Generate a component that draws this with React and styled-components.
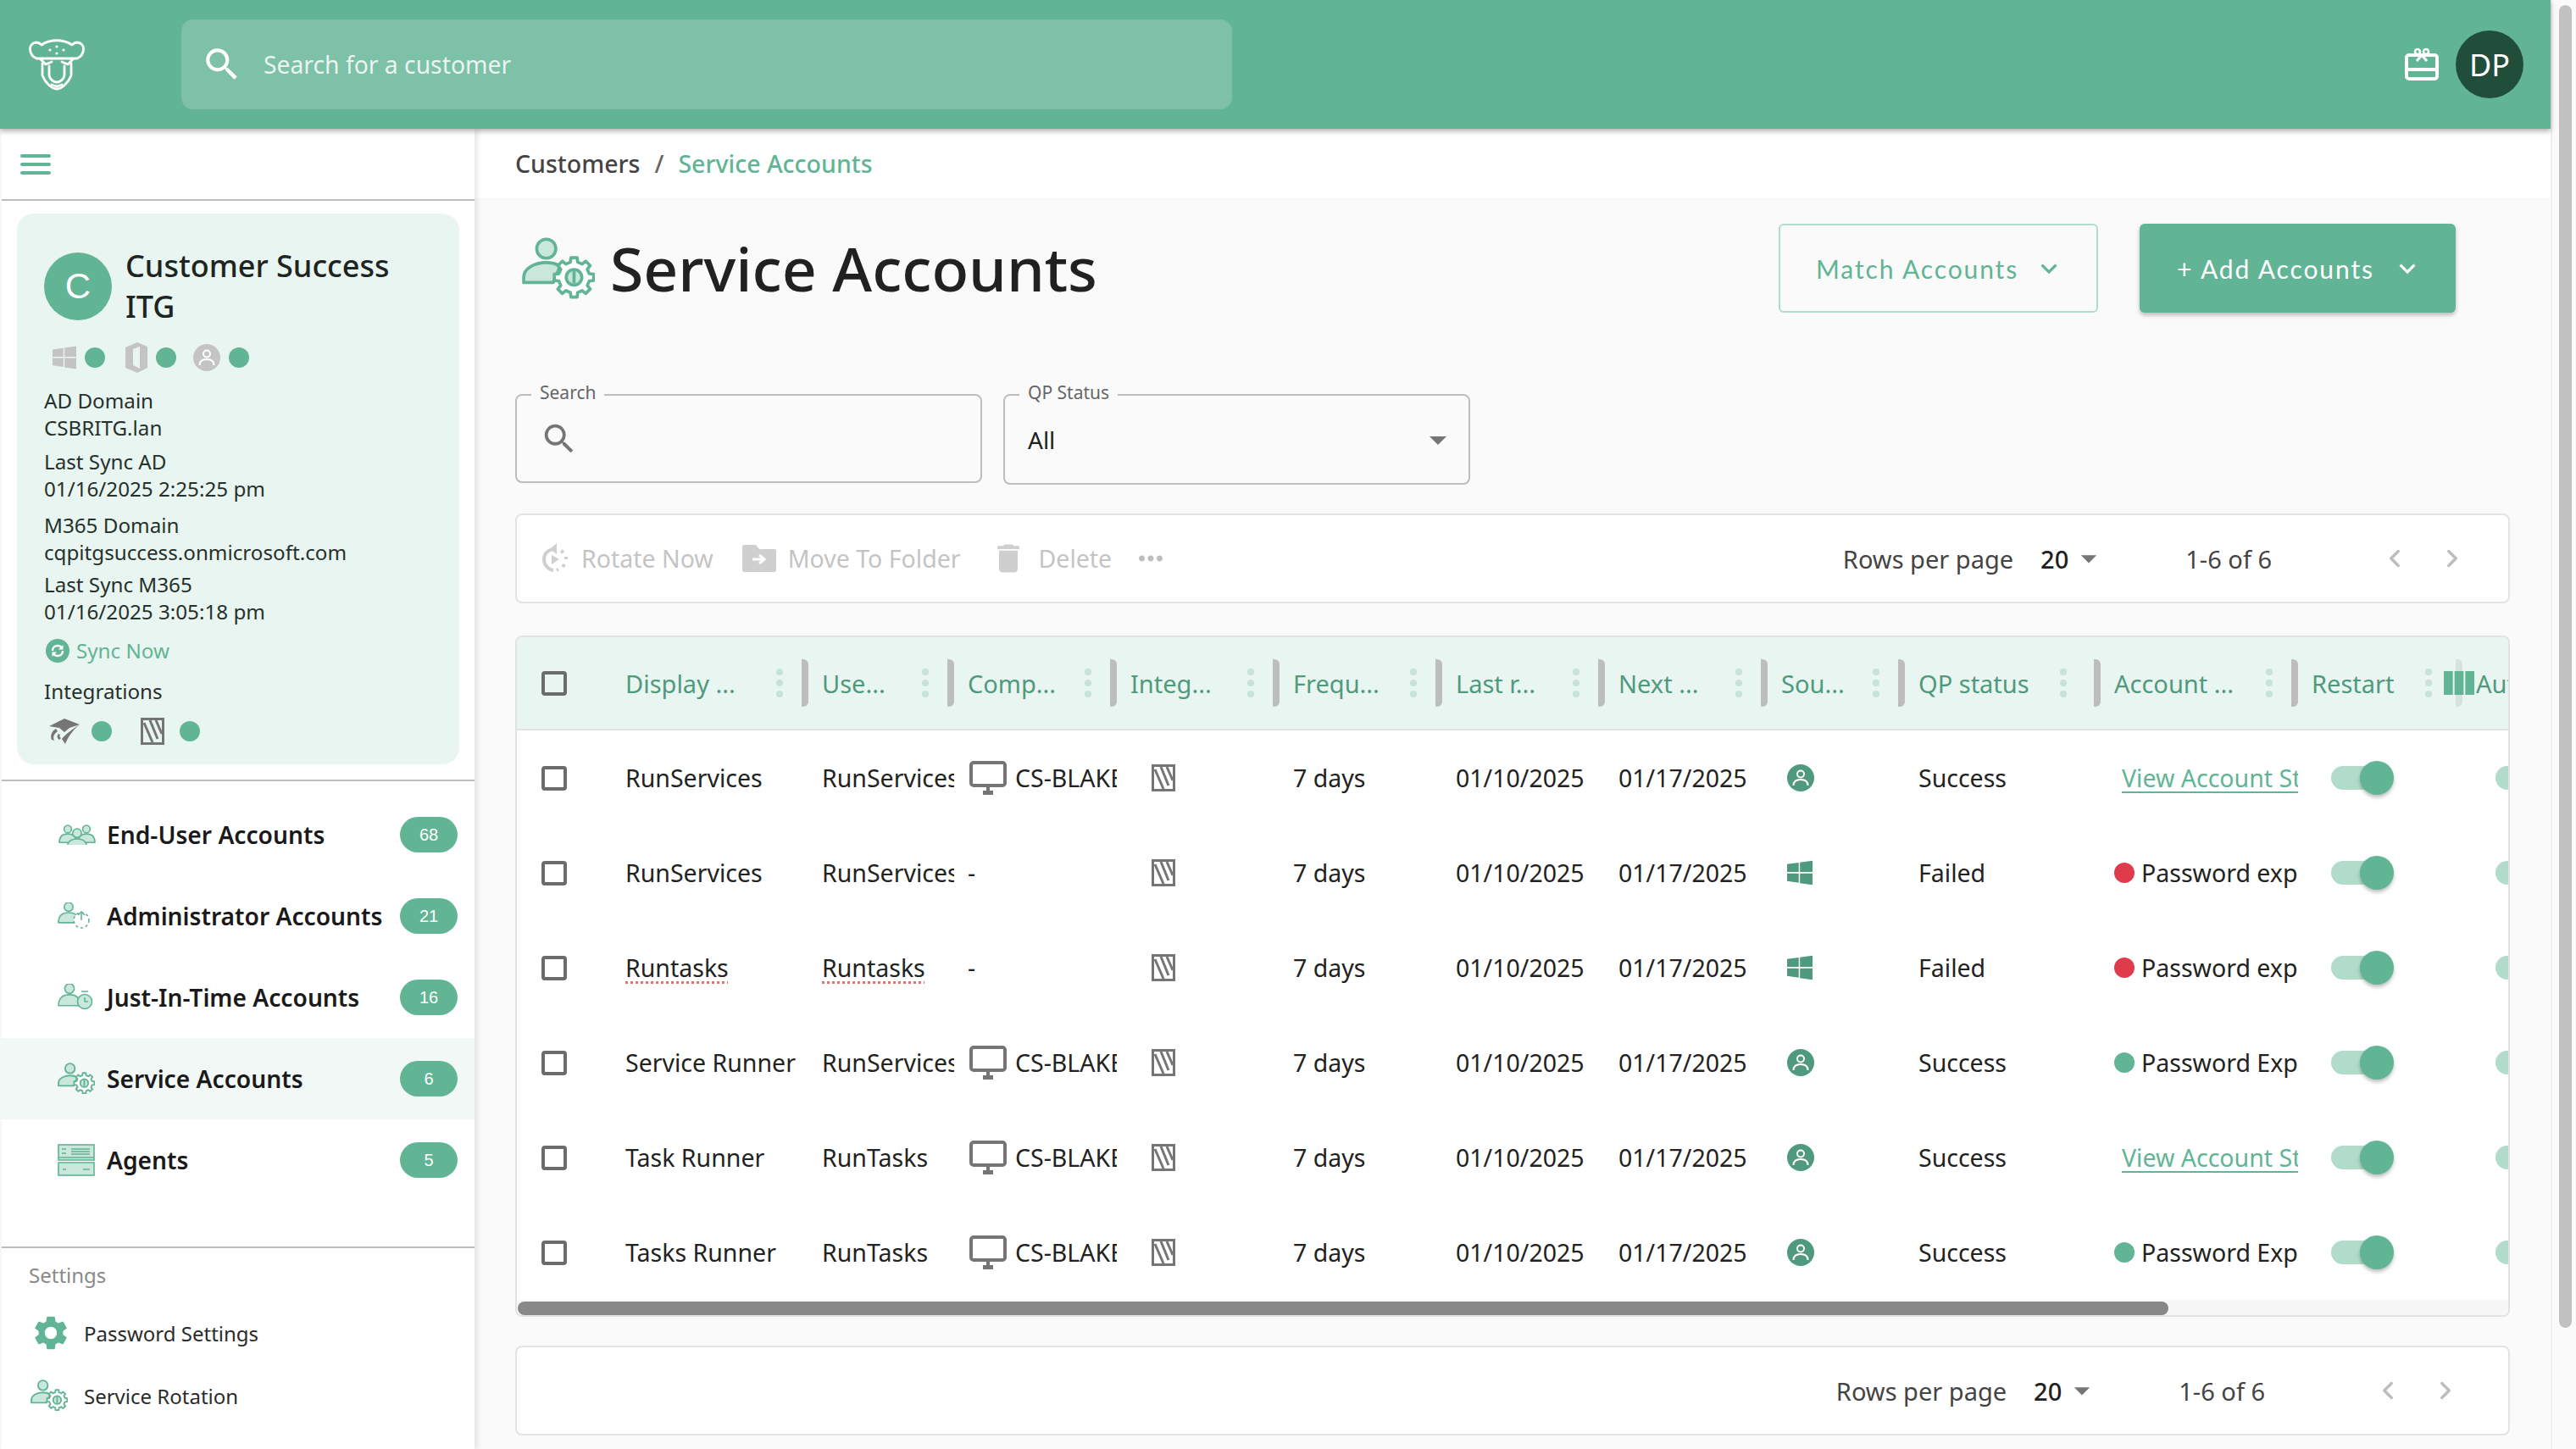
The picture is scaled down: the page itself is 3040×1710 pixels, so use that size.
import React from 'react'
import styled, { createGlobalStyle } from 'styled-components'
import { MdSearch, MdKeyboardArrowDown, MdArrowDropDown, MdSettings, MdDelete, MdMoreHoriz, MdViewColumn } from 'react-icons/md'
import { ChevronLeft, ChevronRight } from 'lucide-react'

const GREEN = '#61b494'
const LIGHT = '#c9e7db'
const GREY = '#757575'

const COLUMNS = '108px 232px 172px 192px 192px 192px 192px 192px 162px 231px 233px 194px 194px'

const headers = [
    { label: 'Display ...' }, { label: 'Use...' }, { label: 'Comp...' }, { label: 'Integ...' },
    { label: 'Frequ...' }, { label: 'Last r...' }, { label: 'Next ...' }, { label: 'Sou...' },
    { label: 'QP status', kebab: 32 }, { label: 'Account ...' },
    { label: 'Restart', kebab: 28, divider: '#d5e3dd' }, { label: 'Auto restart', divider: 'transparent' },
]

const rows = [
    { name: 'RunServices', user: 'RunServices', computer: 'CS-BLAKE-PC', source: 'user', qp: 'Success', account: 'link' },
    { name: 'RunServices', user: 'RunServices', computer: null, source: 'windows', qp: 'Failed', account: 'failed' },
    { name: 'Runtasks', user: 'Runtasks', computer: null, source: 'windows', qp: 'Failed', account: 'failed', flagged: true },
    { name: 'Service Runner', user: 'RunServices', computer: 'CS-BLAKE-PC', source: 'user', qp: 'Success', account: 'ok' },
    { name: 'Task Runner', user: 'RunTasks', computer: 'CS-BLAKE-PC', source: 'user', qp: 'Success', account: 'link' },
    { name: 'Tasks Runner', user: 'RunTasks', computer: 'CS-BLAKE-PC', source: 'user', qp: 'Success', account: 'ok' },
]

const navItems = [
    { label: 'End-User Accounts', count: 68, icon: <EndUserIcon /> },
    { label: 'Administrator Accounts', count: 21, icon: <AdminIcon /> },
    { label: 'Just-In-Time Accounts', count: 16, icon: <TimerIcon /> },
    { label: 'Service Accounts', count: 6, icon: <ServiceIcon width={44} />, active: true },
    { label: 'Agents', count: 5, icon: <AgentsIcon /> },
]

function gearPath(cx, cy, outer, inner, teeth) {
    const pts = []
    const step = (Math.PI * 2) / teeth
    for (let i = 0; i < teeth; i++) {
        const a = i * step
        const w = step * 0.2
        pts.push([cx + inner * Math.cos(a - w * 1.5), cy + inner * Math.sin(a - w * 1.5)])
        pts.push([cx + outer * Math.cos(a - w), cy + outer * Math.sin(a - w)])
        pts.push([cx + outer * Math.cos(a + w), cy + outer * Math.sin(a + w)])
        pts.push([cx + inner * Math.cos(a + w * 1.5), cy + inner * Math.sin(a + w * 1.5)])
    }
    return 'M' + pts.map((p) => p[0].toFixed(1) + ' ' + p[1].toFixed(1)).join('L') + 'Z'
}

function Logo() {
    return (
        <svg width="68" height="62" viewBox="0 0 68 62" fill="none" stroke="#fff" strokeWidth="2.8" strokeLinecap="round" strokeLinejoin="round">
            <path d="M10 24C1 20 -1 6 10 5C12 5 14 6 16 8C26 1 42 1 52 8C54 6 56 5 58 5C69 6 67 20 58 24" />
            <path d="M11 24H57M14 24L21 31L28 28M54 24L47 31L40 28" />
            <path d="M17 30V44C20 52 28 60 34 60C40 60 48 52 51 44V30" />
            <path d="M25 33V43C25 48 30 52 34 52C38 52 43 48 43 43V33" />
            <path d="M28 55L34 57L40 55" />
            <g fill="#fff" stroke="none">
                <circle cx="34" cy="10" r="1.6" /><circle cx="26" cy="14" r="1.6" />
                <circle cx="42" cy="14" r="1.6" /><circle cx="34" cy="18" r="1.6" />
            </g>
        </svg>
    )
}

function GiftIcon() {
    return (
        <svg width="42" height="40" viewBox="0 0 42 40" fill="none" stroke="#fff" strokeWidth="4" strokeLinejoin="round">
            <rect x="3" y="9" width="36" height="28" rx="3" />
            <path d="M3 26H39" />
            <path d="M21 9L15 16M21 9L27 16" strokeWidth="3" />
            <circle cx="16" cy="5" r="3" strokeWidth="2.5" />
            <circle cx="26" cy="5" r="3" strokeWidth="2.5" />
        </svg>
    )
}

function WindowsIcon({ color = '#c4c4c4', size = 28 }) {
    return (
        <svg width={size} height={size} viewBox="0 0 28 28" fill={color}>
            <path d="M0 4.5L12.8 2.8V13H0ZM14.2 2.6L28 .6V13H14.2ZM0 14.6H12.8V25L0 23.2ZM14.2 14.6H28V27.4L14.2 25.4Z" />
        </svg>
    )
}

function OfficeIcon() {
    return (
        <svg width="26" height="36" viewBox="0 0 26 36" fill="#c4c4c4">
            <path d="M14 0L26 5V30L14 36L0 30V6ZM9 8V27L17 31V5Z" fillRule="evenodd" />
        </svg>
    )
}

function UserBadge({ color = '#c4c4c4', size = 32 }) {
    return (
        <svg width={size} height={size} viewBox="0 0 32 32">
            <circle cx="16" cy="16" r="16" fill={color} />
            <circle cx="16" cy="11.5" r="4" fill="none" stroke="#fff" strokeWidth="2" />
            <path d="M7.5 25C7.5 20 11 18 16 18C21 18 24.5 20 24.5 25" fill="none" stroke="#fff" strokeWidth="2" />
        </svg>
    )
}

function CapIcon() {
    return (
        <svg width="36" height="30" viewBox="0 0 36 30" fill={GREY}>
            <path d="M0 9L18 0L36 7L24 11L18 16L12 11Z" />
            <path d="M36 7C30 12 24 18 19 30L15 24C20 18 28 12 36 7Z" />
            <path d="M8 12C3 15 1 20 3 25L6 26C4 21 6 18 10 15ZM11 18C9 20 9 23 12 25L14 23C12 22 12 20 13 19Z" />
        </svg>
    )
}

function StripeMark() {
    return (
        <svg width="28" height="32" viewBox="0 0 28 32" fill="none" stroke={GREY}>
            <rect x="1.5" y="1.5" width="25" height="29" strokeWidth="3" />
            <path d="M4 6L14 29M11 3L20 25M18 3L25 19" strokeWidth="3" />
        </svg>
    )
}

function SyncIcon() {
    return (
        <svg width="28" height="28" viewBox="0 0 28 28" fill="none">
            <circle cx="14" cy="14" r="14" fill={GREEN} />
            <path d="M8 14C8 10 11 8 14 8C16 8 18 9 19 11M20 14C20 18 17 20 14 20C12 20 10 19 9 17" stroke="#fff" strokeWidth="2.4" />
            <path d="M20.5 7V12.5H15ZM7.5 21V15.5H13Z" fill="#fff" />
        </svg>
    )
}

function Person({ x = 0, y = 0, w = 30 }) {
    const h = w * 0.4
    return (
        <g transform={`translate(${x} ${y})`}>
            <circle cx={w / 2} cy={h * 0.5} r={h * 0.5} />
            <path d={`M1 ${h * 2.3}C1 ${h * 1.4} ${w * 0.25} ${h * 1.15} ${w / 2} ${h * 1.15}C${w * 0.75} ${h * 1.15} ${w - 1} ${h * 1.4} ${w - 1} ${h * 2.3}Z`} />
        </g>
    )
}

function EndUserIcon() {
    return (
        <svg width="46" height="24" viewBox="0 0 46 24" fill={LIGHT} stroke={GREEN} strokeWidth="1.6" strokeLinejoin="round">
            <Person x={1} y={1} w={22} />
            <Person x={23} y={1} w={22} />
            <Person x={10} y={5} w={26} />
        </svg>
    )
}

function AdminIcon() {
    return (
        <svg width="40" height="32" viewBox="0 0 40 32" fill={LIGHT} stroke={GREEN} strokeWidth="1.6" strokeLinejoin="round">
            <Person x={0} y={0} w={26} />
            <circle cx="28" cy="21" r="9" fill="#fff" strokeDasharray="3 3" />
            <path d="M28 21V13M24 15L28 11L32 15" fill="none" />
        </svg>
    )
}

function TimerIcon() {
    return (
        <svg width="42" height="32" viewBox="0 0 42 32" fill={LIGHT} stroke={GREEN} strokeWidth="1.6" strokeLinejoin="round">
            <Person x={0} y={0} w={28} />
            <circle cx="32" cy="21" r="8.5" />
            <path d="M32 16V21H36M28 9H36" fill="none" />
        </svg>
    )
}

function ServiceIcon({ width = 44 }) {
    return (
        <svg width={width} height={width * 0.85} viewBox="0 0 84 71" fill={LIGHT} stroke={GREEN} strokeLinejoin="round" strokeWidth="3.6">
            <circle cx="28" cy="13" r="11" />
            <path d="M2 52V46C2 36 14 29 28 29C34 29 39 30 44 33L36 52Z" />
            <path d={gearPath(60, 46, 23, 18, 8)} fill="#fff" />
            <circle cx="60" cy="46" r="9" fill={LIGHT} />
            <path d="M60 39V53" />
        </svg>
    )
}

function AgentsIcon() {
    return (
        <svg width="44" height="38" viewBox="0 0 44 38" fill={LIGHT} stroke={GREEN} strokeWidth="1.6">
            <rect x="1" y="1" width="42" height="18" />
            <rect x="1" y="22" width="42" height="15" />
            <path d="M5 6H10M5 11H10M16 6H38M16 9H38M16 12H38M6 30H10M30 30H38M1 16H43" fill="none" />
        </svg>
    )
}

function MonitorIcon() {
    return (
        <svg width="44" height="40" viewBox="0 0 44 40" fill="none">
            <rect x="2" y="2" width="40" height="27" rx="3" stroke={GREY} strokeWidth="4" />
            <path d="M20 31H24V35H28V40H16V35H20Z" fill={GREY} />
        </svg>
    )
}

function RotateIcon() {
    return (
        <svg width="32" height="36" viewBox="0 0 32 36" fill="none" stroke="#cfcfcf" strokeWidth="4">
            <path d="M14 7C6 8 2 13 2 19C2 26 7 31 13 32" />
            <path d="M17 0V13L9 7Z" fill="#cfcfcf" stroke="none" />
            <path d="M22 9L25 11M28 16V19M26 25L24 28M19 31L17 32" />
            <path d="M11 14L20 19L11 25Z" fill="#cfcfcf" stroke="none" />
        </svg>
    )
}

function FolderIcon() {
    return (
        <svg width="40" height="32" viewBox="0 0 40 32">
            <path d="M2 0H16L20 5H38C39 5 40 6 40 7V30C40 31 39 32 38 32H2C1 32 0 31 0 30V2C0 1 1 0 2 0Z" fill="#cfcfcf" />
            <path d="M12 17H24M20 12L26 17L20 22" fill="none" stroke="#fff" strokeWidth="3" />
        </svg>
    )
}

export default function App() {
    return (
        <Page>
            <GlobalStyle />
            <Window>
                <Header>
                    <Logo />
                    <HeaderSearch>
                        <MdSearch size={50} color="#fff" />
                        <span>Search for a customer</span>
                    </HeaderSearch>
                    <HeaderRight>
                        <GiftIcon />
                        <UserAvatar>DP</UserAvatar>
                    </HeaderRight>
                </Header>
                <Body>
                    <Sidebar>
                        <SidebarTop>
                            <Burger><span /><span /><span /></Burger>
                        </SidebarTop>
                        <CustomerCard>
                            <CardHead>
                                <CardAvatar>C</CardAvatar>
                                <CardTitle>Customer Success ITG</CardTitle>
                            </CardHead>
                            <StatusRow>
                                <WindowsIcon /><Dot />
                                <StatusGap $w={24}><OfficeIcon /></StatusGap><Dot />
                                <StatusGap $w={20}><UserBadge /></StatusGap><Dot />
                            </StatusRow>
                            <InfoGroup $top={19}>AD Domain<br />CSBRITG.lan</InfoGroup>
                            <InfoGroup $top={8}>Last Sync AD<br />01/16/2025 2:25:25 pm</InfoGroup>
                            <InfoGroup $top={11}>M365 Domain<br />cqpitgsuccess.onmicrosoft.com</InfoGroup>
                            <InfoGroup $top={6}>Last Sync M365<br />01/16/2025 3:05:18 pm</InfoGroup>
                            <SyncRow><SyncIcon />Sync Now</SyncRow>
                            <InfoGroup $top={16}>Integrations</InfoGroup>
                            <IntegrationRow>
                                <CapIcon /><Dot $left={14} />
                                <StatusGap $w={34}><StripeMark /></StatusGap><Dot $left={18} />
                            </IntegrationRow>
                        </CustomerCard>
                        <Divider $top={18} />
                        <Nav>
                            {navItems.map((item) => (
                                <NavRow key={item.label} $active={item.active}>
                                    <NavIcon>{item.icon}</NavIcon>
                                    <NavLabel>{item.label}</NavLabel>
                                    <Badge>{item.count}</Badge>
                                </NavRow>
                            ))}
                        </Nav>
                        <Divider $top={54} />
                        <SettingsTitle>Settings</SettingsTitle>
                        <SettingsRow>
                            <SettingsIcon><MdSettings size={48} color={GREEN} /></SettingsIcon>
                            Password Settings
                        </SettingsRow>
                        <SettingsRow>
                            <SettingsIcon><ServiceIcon width={44} /></SettingsIcon>
                            Service Rotation
                        </SettingsRow>
                    </Sidebar>
                    <Main>
                        <Breadcrumb>
                            Customers<Slash>/</Slash><Current>Service Accounts</Current>
                        </Breadcrumb>
                        <Content>
                            <TitleRow>
                                <ServiceIcon width={86} />
                                <Title>Service Accounts</Title>
                                <OutlineButton>Match Accounts<MdKeyboardArrowDown size={38} /></OutlineButton>
                                <FilledButton>+ Add Accounts<MdKeyboardArrowDown size={38} /></FilledButton>
                            </TitleRow>
                            <Filters>
                                <Field $w={551} $h={105}>
                                    <FieldLabel>Search</FieldLabel>
                                    <MdSearch size={46} color={GREY} />
                                </Field>
                                <Field $w={551} $h={107}>
                                    <FieldLabel>QP Status</FieldLabel>
                                    <FieldValue>All</FieldValue>
                                    <MdArrowDropDown size={48} color={GREY} />
                                </Field>
                            </Filters>
                            <Panel>
                                <Action><RotateIcon />Rotate Now</Action>
                                <Action><FolderIcon />Move To Folder</Action>
                                <Action><MdDelete size={44} color="#cfcfcf" />Delete</Action>
                                <MoreDots size={42} color="#bdbdbd" />
                                <Pagination $right={49} />
                            </Panel>
                            <TableBox>
                                <HeaderRow>
                                    <CheckCell><Check /></CheckCell>
                                    {headers.map((h) => (
                                        <HeadCell key={h.label} $divider={h.divider ?? '#bdbdbd'}>
                                            <HeadText>{h.label}</HeadText>
                                            <Kebab $right={h.kebab ?? 22}><i /><i /><i /></Kebab>
                                        </HeadCell>
                                    ))}
                                </HeaderRow>
                                <ColumnsButton><MdViewColumn size={48} color={GREEN} /></ColumnsButton>
                                {rows.map((row, i) => (
                                    <Row key={i}>
                                        <CheckCell><Check /></CheckCell>
                                        <Cell><Flagged $on={row.flagged}>{row.name}</Flagged></Cell>
                                        <Cell><Flagged $on={row.flagged}>{row.user}</Flagged></Cell>
                                        <Cell $pad={row.computer ? 22 : 20}>
                                            {row.computer ? <><MonitorIcon /><Computer>{row.computer}</Computer></> : '-'}
                                        </Cell>
                                        <Cell $pad={45}><StripeMark /></Cell>
                                        <Cell>7 days</Cell>
                                        <Cell>01/10/2025</Cell>
                                        <Cell>01/17/2025</Cell>
                                        <Cell $pad={27}>
                                            {row.source === 'user' ? <UserBadge color="#4f9a7d" /> : <WindowsIcon color="#4f9a7d" size={30} />}
                                        </Cell>
                                        <Cell>{row.qp}</Cell>
                                        <Cell $pad={row.account === 'link' ? 29 : 20}>
                                            {row.account === 'link' && <AccountLink>View Account Status</AccountLink>}
                                            {row.account === 'failed' && <><StatusDot $color="#e03b4b" />Password expired</>}
                                            {row.account === 'ok' && <><StatusDot $color={GREEN} />Password Expiration</>}
                                        </Cell>
                                        <Cell $pad={43}><Switch /></Cell>
                                        <Cell $pad={43}><Switch /></Cell>
                                    </Row>
                                ))}
                                <ScrollTrack><ScrollThumb /></ScrollTrack>
                            </TableBox>
                            <Panel>
                                <Pagination $right={57} />
                            </Panel>
                        </Content>
                    </Main>
                </Body>
            </Window>
            <PageScrollbar><PageThumb /></PageScrollbar>
        </Page>
    )
}

function Pagination({ $right }) {
    return (
        <Pager $right={$right}>
            <PagerLabel>Rows per page</PagerLabel>
            <PagerValue>20</PagerValue>
            <MdArrowDropDown size={44} color={GREY} />
            <PagerRange>1-6 of 6</PagerRange>
            <ChevronLeft size={34} color="#bdbdbd" strokeWidth={2.4} />
            <PagerNext><ChevronRight size={34} color="#bdbdbd" strokeWidth={2.4} /></PagerNext>
        </Pager>
    )
}

const GlobalStyle = createGlobalStyle`
    html, body {
        margin: 0;
        height: 100%;
        overflow: hidden;
        background: #fafafa;
    }
    body {
        font-family: 'Noto Sans', 'Open Sans', sans-serif;
        color: #212121;
    }
    * {
        box-sizing: border-box;
    }
`

const Page = styled.div`
    display: flex;
    width: 3040px;
    height: 1710px;
    overflow: hidden;
`

const Window = styled.div`
    display: flex;
    flex-direction: column;
    width: 3010px;
    height: 100%;
`

const PageScrollbar = styled.div`
    width: 30px;
    padding: 6px 5px 0 8px;
    background: #fafafa;
    border-left: 2px solid #efefef;
`

const PageThumb = styled.div`
    height: 1561px;
    border-radius: 9px;
    background: #c1c1c1;
`

const Header = styled.header`
    position: relative;
    z-index: 3;
    display: flex;
    align-items: center;
    flex-shrink: 0;
    height: 152px;
    padding-left: 33px;
    background: ${GREEN};
    box-shadow: 0 3px 6px rgba(0, 0, 0, 0.3);
`

const HeaderSearch = styled.div`
    display: flex;
    align-items: center;
    gap: 24px;
    width: 1240px;
    height: 106px;
    margin-left: 113px;
    padding-left: 23px;
    border-radius: 14px;
    background: rgba(255, 255, 255, 0.18);
    color: rgba(255, 255, 255, 0.85);
    font-size: 28.3px;
`

const HeaderRight = styled.div`
    display: flex;
    align-items: center;
    gap: 19px;
    margin-left: auto;
    padding-right: 32px;
`

const UserAvatar = styled.div`
    display: flex;
    align-items: center;
    justify-content: center;
    width: 80px;
    height: 80px;
    border-radius: 50%;
    background: #214e3b;
    color: #fff;
    font-size: 36px;
`

const Body = styled.div`
    display: flex;
    flex: 1;
    min-height: 0;
`

const Sidebar = styled.aside`
    position: relative;
    z-index: 2;
    flex-shrink: 0;
    width: 558px;
    margin-left: 2px;
    background: #fff;
    box-shadow: 3px 0 7px rgba(0, 0, 0, 0.1);
`

const SidebarTop = styled.div`
    display: flex;
    align-items: center;
    height: 85px;
    padding-left: 22px;
    border-bottom: 2px solid #bdbdbd;
`

const Burger = styled.div`
    display: flex;
    flex-direction: column;
    gap: 6px;
    width: 36px;
    span {
        height: 4px;
        border-radius: 2px;
        background: ${GREEN};
    }
`

const CustomerCard = styled.section`
    height: 650px;
    margin: 15px 18px 0;
    padding: 38px 0 0 32px;
    border-radius: 20px;
    background: #e9f5f0;
    font-size: 24.2px;
    line-height: 32px;
`

const CardHead = styled.div`
    display: flex;
    align-items: center;
    gap: 16px;
`

const CardAvatar = styled.div`
    display: flex;
    align-items: center;
    justify-content: center;
    flex-shrink: 0;
    width: 80px;
    height: 80px;
    border-radius: 50%;
    background: ${GREEN};
    color: #fff;
    font-family: 'Liberation Sans', sans-serif;
    font-size: 42px;
`

const CardTitle = styled.div`
    width: 330px;
    font-size: 36px;
    font-weight: 500;
    line-height: 48px;
    color: #1d2421;
`

const StatusRow = styled.div`
    display: flex;
    align-items: center;
    height: 32px;
    margin-top: 20px;
    padding-left: 10px;
`

const IntegrationRow = styled(StatusRow)`
    margin-top: 15px;
    padding-left: 6px;
`

const StatusGap = styled.span`
    display: flex;
    margin-left: ${(p) => p.$w}px;
`

const Dot = styled.span`
    width: 24px;
    height: 24px;
    margin-left: ${(p) => p.$left ?? 10}px;
    border-radius: 50%;
    background: ${GREEN};
`

const InfoGroup = styled.div`
    margin-top: ${(p) => p.$top}px;
    color: #26302c;
`

const SyncRow = styled.div`
    display: flex;
    align-items: center;
    gap: 8px;
    margin-top: 14px;
    padding-left: 2px;
    color: ${GREEN};
`

const Divider = styled.hr`
    height: 2px;
    margin: ${(p) => p.$top}px 0 0;
    border: 0;
    background: #bdbdbd;
`

const Nav = styled.nav`
    padding-top: 15px;
`

const NavRow = styled.div`
    display: flex;
    align-items: center;
    height: 96px;
    padding: 0 20px 0 66px;
    background: ${(p) => (p.$active ? '#f1f8f5' : 'transparent')};
`

const NavIcon = styled.span`
    display: flex;
    align-items: center;
    width: 58px;
`

const NavLabel = styled.span`
    flex: 1;
    font-size: 28.2px;
    font-weight: 600;
    white-space: nowrap;
    color: #1a1a1a;
`

const Badge = styled.span`
    display: flex;
    align-items: center;
    justify-content: center;
    width: 68px;
    height: 42px;
    border-radius: 21px;
    background: ${GREEN};
    color: #fff;
    font-family: 'Liberation Sans', sans-serif;
    font-size: 20px;
`

const SettingsTitle = styled.div`
    padding: 16px 0 15px 32px;
    font-size: 24px;
    line-height: 32px;
    color: #8a8a8a;
`

const SettingsRow = styled.div`
    display: flex;
    align-items: center;
    height: 74px;
    padding-left: 34px;
    font-size: 24px;
    color: #2b2b2b;
`

const SettingsIcon = styled.span`
    display: flex;
    align-items: center;
    width: 63px;
`

const Main = styled.main`
    display: flex;
    flex-direction: column;
    flex: 1;
    min-width: 0;
`

const Breadcrumb = styled.div`
    display: flex;
    align-items: center;
    flex-shrink: 0;
    height: 81px;
    padding-left: 48px;
    background: #fff;
    font-size: 28.5px;
    font-weight: 500;
    color: #444;
`

const Slash = styled.span`
    margin: 0 17px;
    color: #666;
`

const Current = styled.span`
    color: ${GREEN};
`

const Content = styled.div`
    flex: 1;
    padding: 31px 48px 0 48px;
    background: #fafafa;
`

const TitleRow = styled.div`
    display: flex;
    align-items: center;
    height: 105px;
    padding: 0 64px 0 8px;
`

const Title = styled.h1`
    flex: 1;
    margin: 0 0 0 18px;
    font-size: 71.5px;
    font-weight: 500;
    line-height: 1;
    color: #212121;
`

const OutlineButton = styled.div`
    display: flex;
    align-items: center;
    justify-content: space-between;
    width: 377px;
    height: 105px;
    padding: 0 37px 0 42px;
    border: 2px solid #b0dcc9;
    border-radius: 6px;
    color: ${GREEN};
    font-family: Lato, sans-serif;
    font-size: 30px;
    letter-spacing: 1.9px;
`

const FilledButton = styled(OutlineButton)`
    width: 373px;
    margin-left: 49px;
    padding: 0 38px 0 44px;
    border: 0;
    background: ${GREEN};
    color: #fff;
    box-shadow: 0 3px 5px rgba(0, 0, 0, 0.25);
`

const Filters = styled.div`
    display: flex;
    gap: 25px;
    margin-top: 96px;
    height: 107px;
`

const Field = styled.div`
    position: relative;
    display: flex;
    align-items: center;
    justify-content: space-between;
    width: ${(p) => p.$w}px;
    height: ${(p) => p.$h}px;
    padding: 0 12px 0 27px;
    border: 2px solid #bdbdbd;
    border-radius: 8px;
`

const FieldLabel = styled.label`
    position: absolute;
    top: -17px;
    left: 17px;
    padding: 0 10px;
    background: #fafafa;
    font-size: 21px;
    line-height: 26px;
    color: #666;
`

const FieldValue = styled.span`
    font-size: 28px;
`

const Panel = styled.div`
    display: flex;
    align-items: center;
    gap: 34px;
    height: 106px;
    margin-top: 34px;
    padding-left: 30px;
    border: 2px solid #e3e3e3;
    border-radius: 8px;
    background: #fff;
`

const Action = styled.span`
    display: flex;
    align-items: center;
    gap: 14px;
    font-size: 28.5px;
    color: #c4c4c4;
`

const MoreDots = styled(MdMoreHoriz)`
    margin-left: -9px;
`

const Pager = styled.div`
    display: flex;
    align-items: center;
    margin-left: auto;
    padding-right: ${(p) => p.$right}px;
    font-size: 29px;
`

const PagerLabel = styled.span`
    color: #444;
`

const PagerValue = styled.span`
    margin: 0 2px 0 32px;
    font-weight: 500;
    color: #212121;
`

const PagerRange = styled.span`
    margin: 0 128px 0 92px;
    color: #444;
`

const PagerNext = styled.span`
    display: flex;
    margin-left: 34px;
`

const TableBox = styled.div`
    position: relative;
    height: 804px;
    margin-top: 38px;
    overflow: hidden;
    border: 2px solid #e0e3e1;
    border-radius: 8px;
    background: #fff;
`

const HeaderRow = styled.div`
    display: grid;
    grid-template-columns: ${COLUMNS};
    align-items: center;
    height: 110px;
    border-bottom: 2px solid #e0e3e1;
    background: #e9f5f0;
`

const Row = styled.div`
    display: grid;
    grid-template-columns: ${COLUMNS};
    align-items: stretch;
    height: 112px;
    font-size: 28.5px;
    color: #222;
    svg {
        flex-shrink: 0;
    }
`

const CheckCell = styled.div`
    display: flex;
    align-items: center;
    padding-left: 29px;
`

const Check = styled.span`
    display: block;
    width: 30px;
    height: 29px;
    border: 4px solid #6b6b6b;
    border-radius: 4px;
`

const HeadCell = styled.div`
    position: relative;
    display: flex;
    align-items: center;
    height: 56px;
    padding-left: 20px;
    border-right: 8px solid ${(p) => p.$divider};
    margin-right: -4px;
    border-radius: 0 6px 6px 0;
    font-size: 29px;
    color: #4f9a7d;
    white-space: nowrap;
`

const HeadText = styled.span`
    flex: 1;
    overflow: hidden;
`

const Kebab = styled.span`
    display: flex;
    flex-direction: column;
    gap: 5px;
    margin-right: ${(p) => p.$right}px;
    i {
        width: 8px;
        height: 8px;
        border-radius: 50%;
        background: #c5e3d6;
    }
`

const ColumnsButton = styled.span`
    position: absolute;
    top: 30px;
    right: 34px;
    display: flex;
`

const Cell = styled.div`
    display: flex;
    align-items: center;
    min-width: 0;
    margin-right: -4px;
    padding-left: ${(p) => p.$pad ?? 20}px;
    overflow: hidden;
    white-space: nowrap;
`

const Flagged = styled.span`
    text-decoration: ${(p) => (p.$on ? 'underline dotted #e0736f 3px' : 'none')};
    text-underline-offset: 5px;
`

const Computer = styled.span`
    margin-left: 10px;
`

const AccountLink = styled.span`
    color: ${GREEN};
    text-decoration: underline;
    text-underline-offset: 5px;
`

const StatusDot = styled.span`
    flex-shrink: 0;
    width: 24px;
    height: 24px;
    margin-right: 8px;
    border-radius: 50%;
    background: ${(p) => p.$color};
`

const Switch = styled.span`
    position: relative;
    display: block;
    flex-shrink: 0;
    width: 58px;
    height: 28px;
    border-radius: 14px;
    background: #b0dcc9;
    &::after {
        content: '';
        position: absolute;
        top: -6px;
        left: 34px;
        width: 40px;
        height: 40px;
        border-radius: 50%;
        background: ${GREEN};
        box-shadow: 0 3px 4px rgba(0, 0, 0, 0.25);
    }
`

const ScrollTrack = styled.div`
    height: 20px;
    padding: 2px 1px;
    background: #f7f7f7;
`

const ScrollThumb = styled.div`
    width: 1948px;
    height: 16px;
    border-radius: 8px;
    background: #888;
`
